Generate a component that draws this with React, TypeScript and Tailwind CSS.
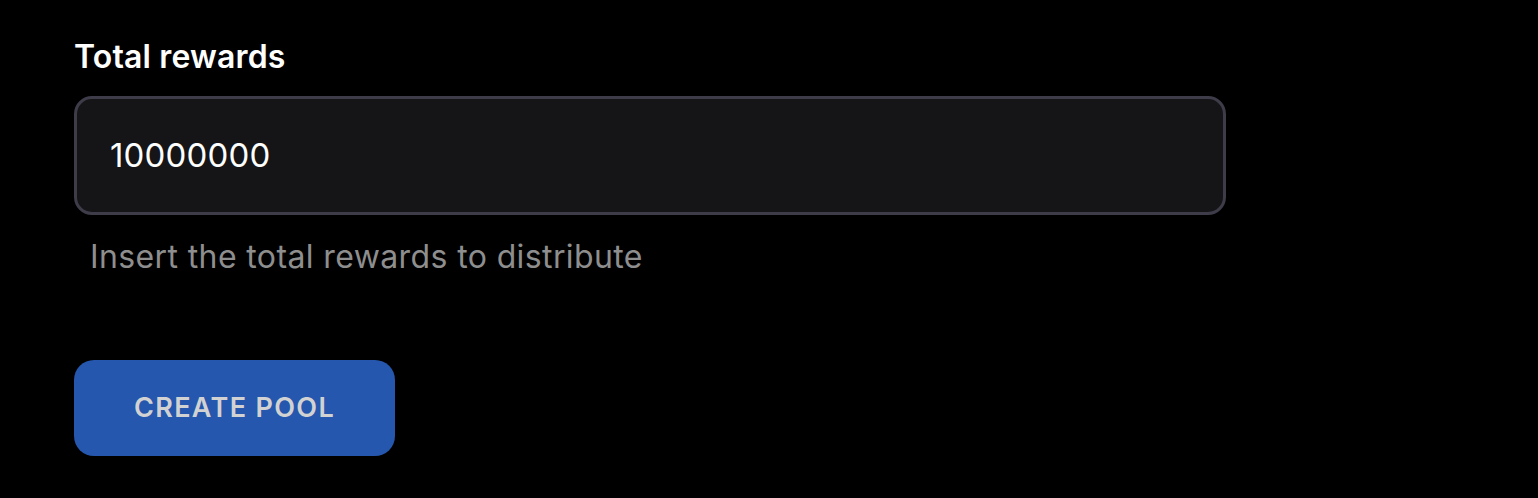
export default function App() {
  return (
    <div className="min-h-[498px] w-full bg-black px-[74px] pt-[38px] font-['Inter',sans-serif]">
      <div className="flex w-[1152px] flex-col">
        <label className="text-[32px] font-semibold leading-[38px] tracking-[0.005em] text-white">Total rewards</label>
        <div className="mt-[20px] flex h-[119px] items-center rounded-[18px] border-[3px] border-[#3d3c48] bg-[#151517] px-[33px]">
          <span className="text-[33px] leading-none tracking-[0.005em] text-white">10000000</span>
        </div>
        <p className="mt-[23px] pl-[16px] text-[32px] leading-[38px] tracking-[0.012em] text-[#8e8e8e]">
          Insert the total rewards to distribute
        </p>
      </div>
      <button className="mt-[84px] flex h-[96px] w-[321px] items-center justify-center rounded-[20px] bg-[#2557ae] text-[27px] font-semibold tracking-[0.05em] text-[#d2d2d2]">
        CREATE POOL
      </button>
    </div>
  );
}
